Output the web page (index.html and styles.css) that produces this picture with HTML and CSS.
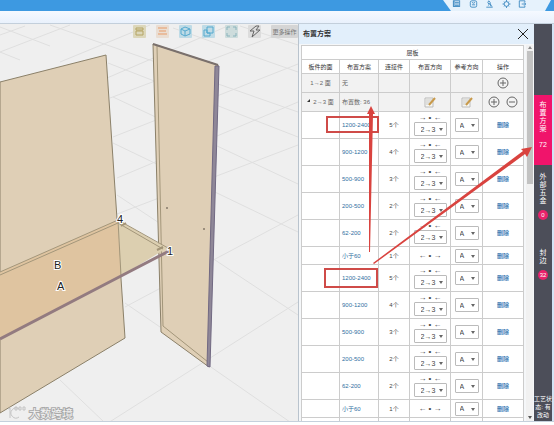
FILE: index.html
```html
<!DOCTYPE html>
<html lang="zh-CN">
<head>
  <meta charset="UTF-8">
  <meta name="viewport" content="width=device-width, initial-scale=1.0">
  <title>布置方案</title>
  <link rel="stylesheet" href="styles.css">
</head>
<body>

  <header class="topbar">
    <nav class="quick-tools">
      <button aria-label="列表"><svg viewBox="0 0 10 10"><rect x="1" y="1" width="8" height="7"/><path d="M3 3h5M3 5h5M3 7h5M2 1v7"/></svg></button>
      <button aria-label="布局"><svg viewBox="0 0 10 10"><rect x="1" y="1" width="8" height="8" rx="2"/><path d="M3 3l2 1 2-1M3 6h4"/></svg></button>
      <button aria-label="用户"><svg viewBox="0 0 10 10"><path d="M4 1l2 2-2 2-1-2zM1 9h8M3 7l2-2 3 3M6 4l1 4"/></svg></button>
      <button aria-label="设置"><svg viewBox="0 0 10 10"><circle cx="5" cy="5" r="3"/><path d="M5 0v2M5 8v2M0 5h2M8 5h2M2 2l1 1M7 7l1 1M8 2L7 3M3 7L2 8"/></svg></button>
      <button aria-label="退出"><svg viewBox="0 0 10 10"><path d="M8 3V1H1v8h7V7M4 5h5M7 3l2 2-2 2"/></svg></button>
    </nav>
  </header>
  <div class="subbar"></div>

  <main class="workspace">
    <section class="canvas">
      <svg class="scene" viewBox="0 24 298 398" preserveAspectRatio="xMinYMin slice">
        <!-- floor grid -->
        <g class="floor">
          <path d="M0 27L50 46M50 25L298 112M113 97L298 184M108 63L298 137M113 143L298 232M173 28L298 72M240 26L298 45M117 195L298 315M125 303L160 327M208 365L290 422M60 380L104 422M0 52L20 60"/>
          <path d="M0 52L70 25M60 62L150 25M107 78L230 25M110 98L298 27M113 137L298 64M117 178L298 102M117 214L298 145M125 307L298 215M108 423L298 302M0 35L25 26"/>
        </g>
        <!-- back panel -->
        <path class="board" d="M0 82L106 55L125 338L0 413z"/>
        <!-- side panel -->
        <path class="board" d="M153 44L218 65L209 367L161 332z"/>
        <path class="line" d="M157 46L163 326L208 362"/>
        <path class="edge" d="M215 66L219 66L210 367L207 366z"/>
        <path class="top-edge" d="M153 44L218 65"/>
        <circle cx="167" cy="208" r="1"/>
        <circle cx="204" cy="229" r="1"/>
        <!-- shelf -->
        <path class="shelf-front" d="M0 272L118 220L121 276L0 339z"/>
        <path class="shelf-side" d="M118 220L167 248L121 276z"/>
        <path class="line" d="M0 272L118 220L168 248M0 275L118 223L163 249M118 220L121 276"/>
        <path class="shelf-edge" d="M0 339L121 276L169 251"/>
        <path class="pin" d="M121 226l5-3M157 250l6-3"/>
        <text x="117" y="223">4</text>
        <text x="167" y="255">1</text>
        <text x="54" y="269">B</text>
        <text x="57" y="290">A</text>
        <!-- watermark -->
        <g class="mark">
          <path d="M8 409l2-1v10M19 409a5 5 0 1 0 0 8M15 407h2v3h-2zM19 407h2v3h-2zM23 407h2v3h-2z"/>
          <text x="29" y="418">大数跨境</text>
        </g>
      </svg>
      <div class="view-tools">
        <button class="tan" aria-label="板件"><svg viewBox="0 0 13 13"><path d="M3 3h7v2H3zM3 6h7v4H3z"/></svg></button>
        <button class="orange" aria-label="图层"><svg viewBox="0 0 13 13"><path d="M2 3h9M3 6h7M2 9h9"/></svg></button>
        <button class="blue" aria-label="立体"><svg viewBox="0 0 13 13"><path d="M2 4l4-2 5 2v5l-5 2-4-2zM2 4l4 2 5-2M6 6v5"/></svg></button>
        <button class="blue" aria-label="复制"><svg viewBox="0 0 13 13"><path d="M5 2h6v6H5zM2 5h3v3h3v3H2z"/></svg></button>
        <button class="teal" aria-label="全屏"><svg viewBox="0 0 13 13"><path d="M2 5V2h3M8 2h3v3M11 8v3H8M5 11H2V8"/></svg></button>
        <button class="gray" aria-label="闪电"><svg viewBox="0 0 13 13"><path d="M8 1L2 6h4l-2 6 8-7H8l3-4z"/></svg></button>
        <button class="more">更多操作</button>
      </div>
    </section>

    <section class="panel">
      <header class="panel-head">
        <h1>布置方案</h1>
        <button class="close" aria-label="关闭"><svg viewBox="0 0 12 12"><path d="M1 1l10 10M11 1L1 11"/></svg></button>
      </header>
      <div class="panel-body">
        <div class="table-wrap">
          <table id="plan-table">
            <colgroup>
              <col class="c-face"><col class="c-plan"><col class="c-link"><col class="c-dir"><col class="c-ref"><col class="c-op">
            </colgroup>
            <thead>
              <tr><th colspan="6">层板</th></tr>
              <tr><th>板件的面</th><th>布置方案</th><th>连接件</th><th>布置方向</th><th>参考方向</th><th>操作</th></tr>
            </thead>
            <tbody>
              <tr class="group">
                <td>1→2 面</td><td class="left">无</td><td></td><td></td><td></td>
                <td><button class="round" aria-label="添加"><svg viewBox="0 0 12 12"><circle cx="6" cy="6" r="5"/><path d="M3 6h6M6 3v6"/></svg></button></td>
              </tr>
              <tr class="group">
                <td><span class="fold"></span>2→3 面</td><td class="left">布置数: 36</td><td></td>
                <td><button class="edit" aria-label="编辑布置方向"><svg viewBox="0 0 12 12"><path class="paper" d="M1 2h8v9H1z"/><path class="rule" d="M2 4h6M2 6h5M2 8h4"/><path class="pencil" d="M11 2L5 9"/></svg></button></td>
                <td><button class="edit" aria-label="编辑参考方向"><svg viewBox="0 0 12 12"><path class="paper" d="M1 2h8v9H1z"/><path class="rule" d="M2 4h6M2 6h5M2 8h4"/><path class="pencil" d="M11 2L5 9"/></svg></button></td>
                <td>
                  <div class="ops">
                    <button class="round" aria-label="添加"><svg viewBox="0 0 12 12"><circle cx="6" cy="6" r="5"/><path d="M3 6h6M6 3v6"/></svg></button>
                    <button class="round" aria-label="减少"><svg viewBox="0 0 12 12"><circle cx="6" cy="6" r="5"/><path d="M3 6h6"/></svg></button>
                  </div>
                </td>
              </tr>
              <!-- plan rows are added by the script -->
            </tbody>
          </table>
        </div>
        <div class="scrollbar"><span class="up"></span><span class="thumb"></span><span class="down"></span></div>
      </div>

      <!-- callouts -->
      <svg class="callouts" viewBox="299 24 255 398">
        <rect x="327" y="117" width="51" height="15"/>
        <rect x="325" y="269" width="52" height="18"/>
        <path d="M369 252L369 114L367 114L371 106L375 114L373 114L370 252z"/>
        <path d="M373 263L523 151L521 149L532 147L527 157L525 154L374 264z"/>
      </svg>
    </section>

    <nav class="tabs">
      <button class="tab active"><span>布置方案</span><b>72</b></button>
      <button class="tab"><span>外部五金</span><i>0</i></button>
      <button class="tab last"><span>封边</span><i>32</i></button>
      <p>工艺状<br>态: 有<br>改动</p>
    </nav>
  </main>

  <script>
    const plans = [
      ["1200-2400", 5],
      ["900-1200", 4],
      ["500-900", 3],
      ["200-500", 2],
      ["62-200", 2],
      ["小于60", 1]
    ];

    const tableBody = document.querySelector("#plan-table tbody");

    [...plans, ...plans].forEach(([range, count]) => {
      const tr = document.createElement("tr");
      const small = count === 1;
      tr.className = small ? "plan small" : "plan";

      const direction = small
        ? `<span class="arrows">← • →</span>`
        : `<span class="arrows">→ • ←</span>
           <label class="pick wide"><select aria-label="布置方向"><option>2→3</option><option>3→2</option></select></label>`;

      tr.innerHTML = `
        <td></td>
        <td class="left"><a href="#">${range}</a></td>
        <td>${count}个</td>
        <td>${direction}</td>
        <td><label class="pick"><select aria-label="参考方向"><option>A</option><option>B</option></select></label></td>
        <td><a class="delete" href="#">删除</a></td>
      `;
      tableBody.appendChild(tr);
    });

    // start of the next row, cut by the panel edge
    const next = document.createElement("tr");
    next.className = "plan";
    next.innerHTML = "<td></td>".repeat(6);
    tableBody.appendChild(next);
  </script>

</body>
</html>
```
FILE: styles.css
```css
* {
  box-sizing: border-box;
}

body {
  display: flex;
  flex-direction: column;
  height: 100vh;
  margin: 0;
  padding-bottom: 3px;
  overflow: hidden;
  background: #fff;
  color: #444;
  font-family: "Liberation Sans", "Noto Sans CJK SC", sans-serif;
  font-size: 6px;
  line-height: 8px;
}

button {
  margin: 0;
  padding: 0;
  border: 0;
  background: none;
  color: inherit;
  font: inherit;
}

svg {
  display: block;
  fill: none;
}

/* top bars */
.topbar {
  flex: none;
  display: flex;
  justify-content: flex-end;
  height: 11px;
  padding-right: 3px;
  background: #3d99e1;
}

.quick-tools {
  display: flex;
  align-items: flex-start;
  justify-content: space-between;
  width: 108px;
  height: 11px;
  padding: 0 24px 0 9px;
  background: #e6f2fc;
  clip-path: polygon(0 0, 100% 0, 102px 100%, 8px 100%);
}

.quick-tools svg {
  width: 9px;
  height: 8px;
  stroke: #2b7dba;
}

.subbar {
  flex: none;
  height: 13px;
  background: linear-gradient(#f5f9ff, #e9f1fc);
  border-bottom: 1px solid #c3cfdb;
}

.workspace {
  flex: 1;
  min-height: 0;
  display: grid;
  grid-template-columns: 1fr 235px 18px;
  padding-right: 2px;
  background: #d3e4f5;
  border-bottom: 1px solid #c5d0dc;
}

/* 3d view */
.canvas {
  position: relative;
  min-height: 0;
  overflow: hidden;
  background: #efefef;
  border-right: 1px solid #b9c3cd;
}

.scene {
  width: 100%;
  height: 100%;
}

.floor {
  stroke: #dfdfdf;
}

.board {
  fill: #dfcfb6;
  stroke: #8b8069;
}

.line {
  stroke: #a3967a;
}

.edge {
  fill: #8f8798;
  stroke: #716982;
}

.top-edge {
  stroke: #7a706c;
  stroke-width: 2;
}

.scene circle {
  fill: #857968;
}

.shelf-front {
  fill: #dfc4a0;
}

.shelf-side {
  fill: #dccfb0;
}

.shelf-edge {
  stroke: #937b80;
  stroke-width: 3;
}

.pin {
  stroke: #a19377;
  stroke-width: 2;
}

.scene text {
  fill: #222;
  stroke: #fff;
  stroke-width: 2;
  paint-order: stroke;
  font-size: 11px;
}

.mark path {
  stroke: #c4c4c4;
}

.scene .mark text {
  fill: #f4f4f4;
  stroke: #aaa;
}

.view-tools {
  position: absolute;
  top: 1px;
  right: 0;
  display: flex;
  gap: 10px;
}

.view-tools button {
  width: 13px;
  height: 13px;
  border-radius: 1px;
  background: #dcdcdc;
}

.view-tools svg {
  width: 13px;
  height: 13px;
  stroke: currentColor;
}

.view-tools .tan {
  background: #dcd7bb;
  color: #b5a565;
}

.view-tools .orange {
  background: #eaded3;
  color: #e79b68;
}

.view-tools .blue {
  background: #bfdbe6;
  color: #55a9ce;
}

.view-tools .teal {
  background: #cddcdc;
  color: #8ab3bc;
}

.view-tools .gray {
  color: #666;
}

.view-tools .more {
  width: 27px;
  background: #d5d5d5;
  color: #777;
}

/* plan panel */
.panel {
  position: relative;
  display: flex;
  flex-direction: column;
  min-height: 0;
  background: #f5f7f9;
}

.panel-head {
  flex: none;
  display: flex;
  align-items: center;
  justify-content: space-between;
  height: 20px;
  padding: 0 5px 0 4px;
  background: #e2effb;
}

.panel-head h1 {
  margin: 0;
  color: #333;
  font-size: 7px;
}

.close svg {
  width: 12px;
  height: 12px;
  stroke: #222;
}

.panel-body {
  flex: 1;
  display: flex;
  gap: 2px;
  min-height: 0;
  padding: 1px 1px 0 2px;
}

.table-wrap {
  flex: 1;
  min-width: 0;
  overflow: hidden;
}

table {
  width: 100%;
  table-layout: fixed;
  border-collapse: collapse;
  background: #fff;
}

.c-face { width: 38px; }
.c-plan { width: 39px; }
.c-link { width: 31px; }
.c-dir { width: 41px; }
.c-ref { width: 32px; }

th, td {
  padding: 0;
  border: 1px solid #ccc;
  text-align: center;
  white-space: nowrap;
}

th {
  height: 14px;
  color: #333;
  font-weight: normal;
}

.group td {
  height: 19px;
  background: #f2f2f2;
  color: #666;
}

.plan td {
  height: 27px;
}

.plan.small td {
  height: 18px;
}

td.left {
  padding-left: 2px;
  text-align: left;
}

a {
  color: #2f6f9f;
  text-decoration: none;
}

.delete {
  background: #d9e9f7;
  color: #2064a4;
}

.fold {
  display: inline-block;
  margin-right: 3px;
  border-bottom: 3px solid #333;
  border-left: 3px solid transparent;
  vertical-align: 2px;
}

.round svg,
.edit svg {
  width: 12px;
  height: 12px;
  stroke: #666;
}

td > button {
  display: block;
  margin: 0 auto;
}

.ops {
  display: flex;
  justify-content: center;
  gap: 6px;
}

.edit .paper {
  fill: #f7f7f2;
  stroke: #bbb;
}

.edit .rule {
  stroke: #c8c8c8;
}

.edit .pencil {
  stroke: #c89a4b;
  stroke-width: 2;
}

.arrows {
  display: block;
  font-size: 8px;
  line-height: 8px;
}

.pick {
  position: relative;
  display: block;
  width: 24px;
  height: 14px;
  margin: 0 auto;
}

.pick.wide {
  width: 33px;
}

.pick::after {
  content: "";
  position: absolute;
  top: 6px;
  right: 4px;
  border: 2px solid transparent;
  border-top: 3px solid #666;
  border-bottom: 0;
}

select {
  display: block;
  width: 100%;
  height: 100%;
  margin: 0;
  padding: 0 0 0 4px;
  appearance: none;
  border: 1px solid #bbb;
  border-radius: 1px;
  background: #fff;
  color: #444;
  font-family: inherit;
  font-size: 7px;
}

.wide select {
  padding-left: 6px;
}

.scrollbar {
  display: flex;
  flex-direction: column;
  align-items: center;
  justify-content: space-between;
  width: 7px;
  padding: 1px 0 2px;
  background: #f1f1f1;
}

.scrollbar .thumb {
  width: 6px;
  height: 133px;
  margin: 2px 0 auto;
  background: #c2c2c2;
}

.up,
.down {
  border: 2px solid transparent;
}

.up {
  border-top: 0;
  border-bottom: 3px solid #888;
}

.down {
  border-top: 3px solid #555;
  border-bottom: 0;
}

.callouts {
  position: absolute;
  top: 0;
  left: 0;
  width: 255px;
  height: 398px;
  z-index: 1;
  pointer-events: none;
}

.callouts rect {
  stroke: #cf4b48;
  stroke-width: 2;
}

.callouts path {
  fill: #d9433f;
}

/* side tabs */
.tabs {
  display: flex;
  flex-direction: column;
  padding-top: 71px;
  background: #4c4e59;
  color: #fff;
}

.tab {
  display: flex;
  flex-direction: column;
  align-items: center;
  gap: 5px;
  height: 76px;
  padding-top: 8px;
  font-size: 7px;
  line-height: 8px;
}

.tab span {
  width: 7px;
  word-break: break-all;
}

.tab b {
  margin-top: 3px;
  font-weight: normal;
}

.tab i {
  width: 10px;
  height: 10px;
  border-radius: 5px;
  background: #e8226b;
  font-size: 6px;
  font-style: normal;
  line-height: 10px;
}

.active {
  height: 70px;
  padding-top: 6px;
  background: #f0146b;
}

.tabs p {
  margin: auto 0 2px;
  font-size: 6px;
  text-align: center;
  white-space: nowrap;
}
```
